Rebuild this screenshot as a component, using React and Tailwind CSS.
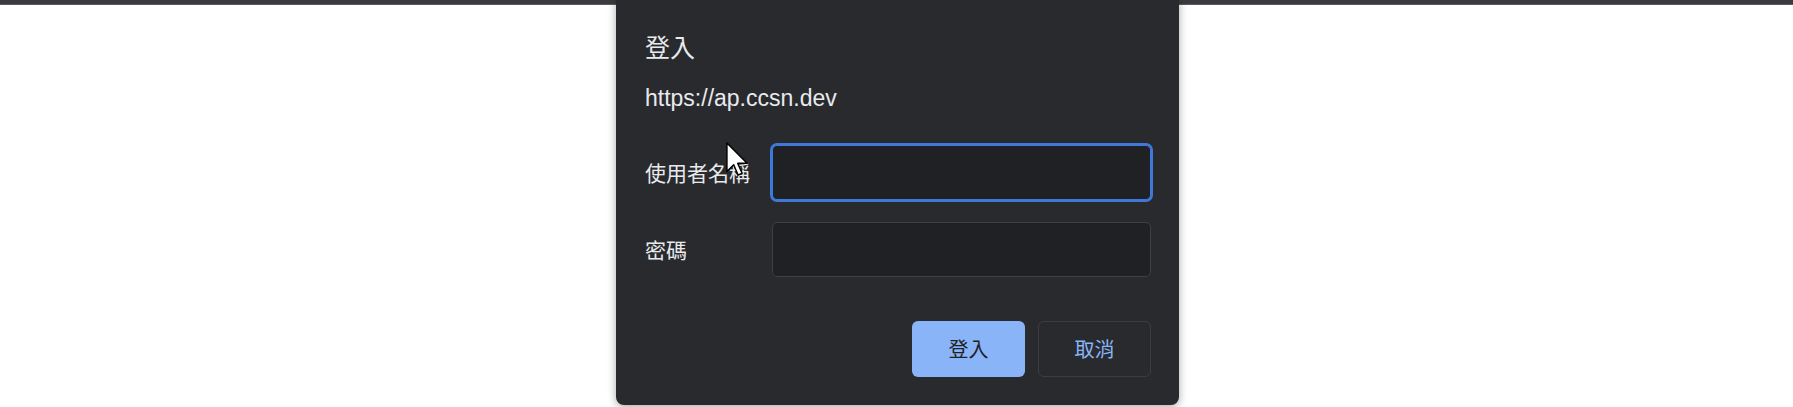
export default function App() {
  const cjk = { fontFamily: '"Noto Sans CJK TC", "Noto Sans CJK SC", sans-serif' }
  const latin = { fontFamily: '"Liberation Sans", Arial, sans-serif' }

  return (
    <div className="relative w-[1793px] h-[407px] bg-white overflow-hidden">
      {/* browser chrome strip */}
      <div className="h-[5px] bg-[#3a3b3f] border-b border-[#5a5b5f]" />

      {/* auth dialog */}
      <div className="-mt-[6px] ml-[616px] w-[563px] bg-[#292a2d] rounded-b-[8px] shadow-[0_2px_8px_rgba(0,0,0,0.35)] pl-[29px] pr-[28px] pt-[35px] pb-[28px]">
        <h2 className="text-[25px] leading-[25px] text-[#e8eaed]" style={cjk}>
          登入
        </h2>
        <p className="mt-[28px] text-[23px] leading-[23px] text-[#e8eaed] font-normal" style={latin}>
          https://ap.ccsn.dev
        </p>

        <div className="mt-[35px] flex flex-col gap-[22px]">
          <div className="flex items-center">
            <label className="w-[127px] shrink-0 text-[21px] leading-[21px] text-[#e8eaed]" style={cjk}>
              使用者名稱
            </label>
            <div className="h-[55px] flex-1 rounded-[5px] bg-[#202124] border border-[#3f78d9] ring-2 ring-[#3f78d9]" />
          </div>
          <div className="flex items-center">
            <label className="w-[127px] shrink-0 text-[21px] leading-[21px] text-[#e8eaed]" style={cjk}>
              密碼
            </label>
            <div className="h-[55px] flex-1 rounded-[5px] bg-[#202124] border border-[#3e3f43]" />
          </div>
        </div>

        <div className="mt-[44px] flex justify-end gap-[13px]">
          <button className="w-[113px] h-[56px] rounded-[6px] bg-[#8ab4f8] text-[20px] text-[#202124]" style={cjk}>
            登入
          </button>
          <button className="w-[113px] h-[56px] rounded-[6px] border border-[#3c3d41] bg-transparent text-[20px] text-[#8ab4f8]" style={cjk}>
            取消
          </button>
        </div>
      </div>

      {/* mouse pointer */}
      <svg
        className="absolute left-[726px] top-[142px]"
        width="22"
        height="35"
        viewBox="0 0 12 19"
      >
        <path
          d="M0.5 0.5 L0.5 16 L4.2 12.4 L6.6 18 L8.8 17 L6.4 11.6 L11.5 11.6 Z"
          fill="#ffffff"
          stroke="#000000"
          strokeWidth="0.8"
          strokeLinejoin="round"
        />
      </svg>
    </div>
  )
}
